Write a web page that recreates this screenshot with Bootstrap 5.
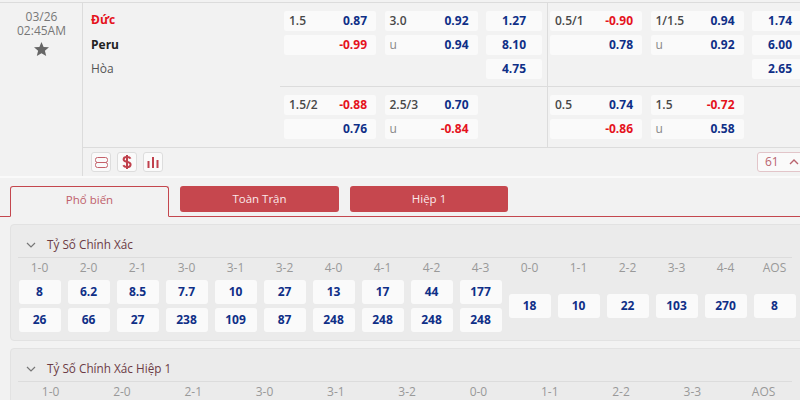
<!DOCTYPE html>
<html lang="vi">
<head>
  <meta charset="UTF-8">
  <title>Tỷ Số Chính Xác</title>
  <link href="https://cdn.jsdelivr.net/npm/bootstrap@5.3.2/dist/css/bootstrap.min.css" rel="stylesheet">
  <style>
    html, body { height: 400px; overflow: hidden; }
    body { background: #f2f2f2; font-family: "Open Sans", "Noto Sans", sans-serif; font-size: 12px; color: #555; }
    .match-wrap { margin-top: 2px; height: 176px; border-top: 1px solid #dcdcdc; border-bottom: 2px solid #fafafa; width: 800px; }
    .time-col { width: 83px; flex: none; border-right: 1px solid #dcdcdc; text-align: center; padding: 7px 0 0 1px; color: #777; }
    .time-line { height: 14px; line-height: 14px; }
    .time-col svg { display: block; margin: 4px auto 0; }
    .main-col { flex: 1; min-width: 0; }
    .team-col { width: 197px; flex: none; padding: 5px 0 0 8px; }
    .team-col div { height: 24.5px; line-height: 24px; }
    .team-home { color: #e5131d; font-weight: 700; }
    .team-away { color: #222; font-weight: 700; }
    .odds-top { height: 145px; border-bottom: 1px solid #dcdcdc; }
    .odds-group { flex: none; }
    .odds-group.one { width: 268px; border-right: 1px solid #dcdcdc; }
    .odds-group.two { width: 255px; }
    .odds-row { display: flex; gap: 8.5px; padding: 8px 0 0 4px; }
    .odds-group.two .odds-row { padding-left: 2px; }
    .odds-row.first { height: 84px; border-bottom: 1px solid #dcdcdc; }
    .odds-row.second { height: 60px; }
    .odds-col { width: 93px; flex: none; display: flex; flex-direction: column; gap: 4px; }
    .odds-col:first-child { width: 92px; }
    .odds-col.narrow { width: 56px; }
    .odds-cell { height: 20px; background: #fafafa; border-radius: 2px; display: flex; justify-content: space-between; align-items: center; padding: 0 9px 0 5px; font-weight: 600; color: #484848; }
    .odds-col.narrow .odds-cell { justify-content: center; padding: 0; }
    .unit { font-weight: 400; color: #888; }
    .val-blue { color: #0f2f87; font-weight: 700; }
    .val-red { color: #e5131d; font-weight: 700; }
    .match-foot { height: 28px; padding: 4px 0 0 8px; }
    .tool-btn { width: 20px; height: 20px; background: #fafafa; border: 1px solid #ddd; border-radius: 3px; display: flex; align-items: center; justify-content: center; margin-right: 6px; }
    .more-btn { width: 60px; height: 20px; margin-left: auto; margin-right: -17px; border: 1px solid #e2c5c9; border-radius: 3px; background: #fafafa; color: #b9636e; padding-left: 7px; display: flex; align-items: center; gap: 10px; }
    .tabs-bar { margin: 8px 0 0; padding: 0 0 0 10px; border-bottom: 1px solid #c4474e; gap: 11px; height: 31px; width: 800px; }
    .tabs-bar .nav-link { width: 159px; height: 26px; padding: 0; font-size: 11.5px; line-height: 26px; text-align: center; border-radius: 3px; border: 0; background: #c6474e; color: #fbe9ea; margin: 0; }
    .tabs-bar li:last-child .nav-link { width: 158px; }
    .tabs-bar .nav-link.active { height: 31px; line-height: 25px; background: #f2f2f2; color: #c0606a; border: 1px solid #c4474e; border-bottom-color: #f2f2f2; border-radius: 3px 3px 0 0; }
    .score-box { margin: 7px 0 7px 10px; width: 800px; background: #ebebeb; border: 1px solid #e2e2e2; border-radius: 4px; padding: 0 4px; }
    .box-one { height: 117px; }
    .box-title { height: 33px; margin: 0 13px 0 3px; padding: 8px 0 0 8px; border-bottom: 1px solid #dcdcdc; color: #6b3b45; font-size: 11.75px; display: flex; align-items: center; gap: 11px; }
    .score-col { width: 49px; flex: none; text-align: center; display: flex; flex-direction: column; }
    .wide .score-col { width: 71.3px; }
    .score-head { padding-top: 3px; margin-bottom: 5px; line-height: 14px; color: #999; }
    .score-cells { flex: 1; display: flex; flex-direction: column; justify-content: center; gap: 4px; align-items: center; }
    .score-cell { width: 42px; height: 24px; line-height: 24px; background: #fafafa; border-radius: 3px; color: #0f2f87; font-weight: 700; }
  </style>
</head>
<body>
<div class="match-wrap d-flex">
  <div class="time-col">
    <div class="time-line">03/26</div>
    <div class="time-line">02:45AM</div>
    <svg width="15" height="14" viewBox="0 0 15 14"><polygon fill="#666" points="7.5,0 9.6,4.9 15,5.3 10.9,8.8 12.2,14 7.5,11.2 2.8,14 4.1,8.8 0,5.3 5.4,4.9"/></svg>
  </div>
  <div class="main-col">
    <div class="odds-top d-flex">
      <div class="team-col">
        <div class="team-home">Đức</div>
        <div class="team-away">Peru</div>
        <div>Hòa</div>
      </div>
      <div class="odds-group one">
        <div class="odds-row first">
          <div class="odds-col">
            <div class="odds-cell"><span>1.5</span><span class="val-blue">0.87</span></div>
            <div class="odds-cell"><span></span><span class="val-red">-0.99</span></div>
          </div>
          <div class="odds-col">
            <div class="odds-cell"><span>3.0</span><span class="val-blue">0.92</span></div>
            <div class="odds-cell"><span class="unit">u</span><span class="val-blue">0.94</span></div>
          </div>
          <div class="odds-col narrow">
            <div class="odds-cell val-blue">1.27</div>
            <div class="odds-cell val-blue">8.10</div>
            <div class="odds-cell val-blue">4.75</div>
          </div>
        </div>
        <div class="odds-row second">
          <div class="odds-col">
            <div class="odds-cell"><span>1.5/2</span><span class="val-red">-0.88</span></div>
            <div class="odds-cell"><span></span><span class="val-blue">0.76</span></div>
          </div>
          <div class="odds-col">
            <div class="odds-cell"><span>2.5/3</span><span class="val-blue">0.70</span></div>
            <div class="odds-cell"><span class="unit">u</span><span class="val-red">-0.84</span></div>
          </div>
        </div>
      </div>
      <div class="odds-group two">
        <div class="odds-row first">
          <div class="odds-col">
            <div class="odds-cell"><span>0.5/1</span><span class="val-red">-0.90</span></div>
            <div class="odds-cell"><span></span><span class="val-blue">0.78</span></div>
          </div>
          <div class="odds-col">
            <div class="odds-cell"><span>1/1.5</span><span class="val-blue">0.94</span></div>
            <div class="odds-cell"><span class="unit">u</span><span class="val-blue">0.92</span></div>
          </div>
          <div class="odds-col narrow">
            <div class="odds-cell val-blue">1.74</div>
            <div class="odds-cell val-blue">6.00</div>
            <div class="odds-cell val-blue">2.65</div>
          </div>
        </div>
        <div class="odds-row second">
          <div class="odds-col">
            <div class="odds-cell"><span>0.5</span><span class="val-blue">0.74</span></div>
            <div class="odds-cell"><span></span><span class="val-red">-0.86</span></div>
          </div>
          <div class="odds-col">
            <div class="odds-cell"><span>1.5</span><span class="val-red">-0.72</span></div>
            <div class="odds-cell"><span class="unit">u</span><span class="val-blue">0.58</span></div>
          </div>
        </div>
      </div>
    </div>
    <div class="match-foot d-flex">
      <div class="tool-btn">
        <svg width="13" height="11" viewBox="0 0 13 11" fill="none" stroke="#c4606a" stroke-width="1"><rect x="0.5" y="0.5" width="12" height="5" rx="2"/><rect x="0.5" y="5.5" width="12" height="5" rx="2"/></svg>
      </div>
      <div class="tool-btn">
        <svg width="10" height="14" viewBox="0 0 10 14" fill="none" stroke="#c0404c" stroke-width="2"><path d="M8.5 3.6C8 2.5 6.5 2 5 2 3 2 1.6 3 1.6 4.4 1.6 7.4 8.6 6.2 8.6 9.4 8.6 11 7 12 5 12 3.3 12 1.9 11.3 1.3 10.2"/><path d="M5 0v14"/></svg>
      </div>
      <div class="tool-btn">
        <svg width="12" height="11" viewBox="0 0 12 11" fill="#c0404c"><rect x="0.5" y="4" width="2" height="7"/><rect x="5" y="0" width="2" height="11"/><rect x="9.5" y="3" width="2" height="8"/></svg>
      </div>
      <div class="more-btn">61
        <svg width="10" height="6" viewBox="0 0 10 6" fill="none" stroke="#b9636e" stroke-width="1.4"><path d="M1 5l4-4 4 4"/></svg>
      </div>
    </div>
  </div>
</div>

<ul class="nav nav-tabs tabs-bar">
  <li class="nav-item"><a class="nav-link active" href="#">Phổ biến</a></li>
  <li class="nav-item"><a class="nav-link" href="#">Toàn Trận</a></li>
  <li class="nav-item"><a class="nav-link" href="#">Hiệp 1</a></li>
</ul>

<div class="score-box box-one">
  <div class="box-title">
    <svg width="10" height="6" viewBox="0 0 10 6" fill="none" stroke="#777" stroke-width="1.2"><path d="M1 1l4 4 4-4"/></svg>
    Tỷ Số Chính Xác
  </div>
  <div class="d-flex">
    <div class="score-col"><div class="score-head">1-0</div><div class="score-cells"><div class="score-cell">8</div><div class="score-cell">26</div></div></div>
    <div class="score-col"><div class="score-head">2-0</div><div class="score-cells"><div class="score-cell">6.2</div><div class="score-cell">66</div></div></div>
    <div class="score-col"><div class="score-head">2-1</div><div class="score-cells"><div class="score-cell">8.5</div><div class="score-cell">27</div></div></div>
    <div class="score-col"><div class="score-head">3-0</div><div class="score-cells"><div class="score-cell">7.7</div><div class="score-cell">238</div></div></div>
    <div class="score-col"><div class="score-head">3-1</div><div class="score-cells"><div class="score-cell">10</div><div class="score-cell">109</div></div></div>
    <div class="score-col"><div class="score-head">3-2</div><div class="score-cells"><div class="score-cell">27</div><div class="score-cell">87</div></div></div>
    <div class="score-col"><div class="score-head">4-0</div><div class="score-cells"><div class="score-cell">13</div><div class="score-cell">248</div></div></div>
    <div class="score-col"><div class="score-head">4-1</div><div class="score-cells"><div class="score-cell">17</div><div class="score-cell">248</div></div></div>
    <div class="score-col"><div class="score-head">4-2</div><div class="score-cells"><div class="score-cell">44</div><div class="score-cell">248</div></div></div>
    <div class="score-col"><div class="score-head">4-3</div><div class="score-cells"><div class="score-cell">177</div><div class="score-cell">248</div></div></div>
    <div class="score-col"><div class="score-head">0-0</div><div class="score-cells"><div class="score-cell">18</div></div></div>
    <div class="score-col"><div class="score-head">1-1</div><div class="score-cells"><div class="score-cell">10</div></div></div>
    <div class="score-col"><div class="score-head">2-2</div><div class="score-cells"><div class="score-cell">22</div></div></div>
    <div class="score-col"><div class="score-head">3-3</div><div class="score-cells"><div class="score-cell">103</div></div></div>
    <div class="score-col"><div class="score-head">4-4</div><div class="score-cells"><div class="score-cell">270</div></div></div>
    <div class="score-col"><div class="score-head">AOS</div><div class="score-cells"><div class="score-cell">8</div></div></div>
  </div>
</div>

<div class="score-box wide">
  <div class="box-title">
    <svg width="10" height="6" viewBox="0 0 10 6" fill="none" stroke="#777" stroke-width="1.2"><path d="M1 1l4 4 4-4"/></svg>
    Tỷ Số Chính Xác Hiệp 1
  </div>
  <div class="d-flex">
    <div class="score-col"><div class="score-head">1-0</div></div>
    <div class="score-col"><div class="score-head">2-0</div></div>
    <div class="score-col"><div class="score-head">2-1</div></div>
    <div class="score-col"><div class="score-head">3-0</div></div>
    <div class="score-col"><div class="score-head">3-1</div></div>
    <div class="score-col"><div class="score-head">3-2</div></div>
    <div class="score-col"><div class="score-head">0-0</div></div>
    <div class="score-col"><div class="score-head">1-1</div></div>
    <div class="score-col"><div class="score-head">2-2</div></div>
    <div class="score-col"><div class="score-head">3-3</div></div>
    <div class="score-col"><div class="score-head">AOS</div></div>
  </div>
</div>

<script src="https://cdn.jsdelivr.net/npm/bootstrap@5.3.2/dist/js/bootstrap.bundle.min.js"></script>
</body>
</html>
